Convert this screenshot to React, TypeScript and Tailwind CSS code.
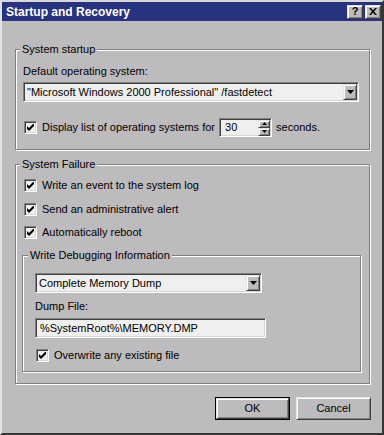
import React from "react";

const font = { fontFamily: '"Liberation Sans", Arial, sans-serif' };

const sunken =
  "border border-t-[#808080] border-l-[#808080] border-r-white border-b-white shadow-[inset_1px_1px_0_#404040,inset_-1px_-1px_0_#d6d6d6] bg-[#efefef]";
const raised =
  "border border-t-[#e4e4e4] border-l-[#e4e4e4] border-r-[#404040] border-b-[#404040] shadow-[inset_1px_1px_0_#ffffff,inset_-1px_-1px_0_#808080] bg-[#bdbbbd]";

const Check = () => (
  <div className={`w-[13px] h-[13px] shrink-0 flex items-center justify-center ${sunken}`}>
    <svg width="7" height="7" viewBox="0 0 7 7">
      <path d="M0 2 L2 4 L7 -1 L7 2 L2 7 L0 5 Z" fill="#000" />
    </svg>
  </div>
);

const Arrow = ({ up = false, w = 7 }: { up?: boolean; w?: number }) => (
  <svg width={w} height={Math.ceil(w / 2)} viewBox={`0 0 ${w} ${Math.ceil(w / 2)}`}>
    {up ? (
      <path d={`M0 ${Math.ceil(w / 2)} L${w / 2} 0 L${w} ${Math.ceil(w / 2)} Z`} fill="#000" />
    ) : (
      <path d={`M0 0 L${w} 0 L${w / 2} ${Math.ceil(w / 2)} Z`} fill="#000" />
    )}
  </svg>
);

const Combo = ({ text, className }: { text: string; className: string }) => (
  <div className={`h-[20px] flex items-center ${sunken} ${className}`}>
    <span className="flex-1 pl-[3px] text-[11px] leading-[13px] whitespace-nowrap overflow-hidden">{text}</span>
    <div className={`w-[14px] h-[16px] mr-[1px] flex items-center justify-center ${raised}`}>
      <Arrow />
    </div>
  </div>
);

const Group = ({
  label,
  className,
  labelLeft,
  children,
}: {
  label: string;
  className: string;
  labelLeft: string;
  children: React.ReactNode;
}) => (
  <div
    className={`relative border border-[#808080] shadow-[inset_1px_1px_0_#ffffff,1px_1px_0_#ffffff] flex flex-col ${className}`}
  >
    <span className={`absolute -top-[7px] ${labelLeft} px-[2px] bg-[#bdbbbd] text-[11px] leading-[13px]`}>{label}</span>
    {children}
  </div>
);

const CheckRow = ({ label, className }: { label: string; className: string }) => (
  <div className={`h-[17px] flex items-center gap-[5px] ${className}`}>
    <Check />
    <span className="text-[11px] leading-[13px]">{label}</span>
  </div>
);

export default function App() {
  return (
    <div
      style={font}
      className="w-[384px] h-[435px] flex flex-col bg-[#bdbbbd] text-black border-l-2 border-t-2 border-l-[#e2e2e2] border-t-[#d8d8d8] border-r-2 border-b-2 border-r-[#353535] border-b-[#353535] select-none"
    >
      <div className="h-[19px] bg-[#283380] flex items-center pl-[4px] pr-[1px]">
        <span className="flex-1 text-white font-bold text-[12px] leading-[14px]">Startup and Recovery</span>
        <div className={`w-[16px] h-[14px] flex items-center justify-center ${raised}`}>
          <span className="font-bold text-[11px] leading-[11px]">?</span>
        </div>
        <div className={`w-[16px] h-[14px] ml-[2px] flex items-center justify-center ${raised}`}>
          <svg width="8" height="7" viewBox="0 0 8 7">
            <path d="M0 0 H2 L4 2.5 L6 0 H8 L5 3.5 L8 7 H6 L4 4.5 L2 7 H0 L3 3.5 Z" fill="#000" />
          </svg>
        </div>
      </div>

      <div className="flex flex-col pl-[13px]">
        <Group label="System startup" className="mt-[28px] w-[355px] h-[101px]" labelLeft="left-[4px]">
          <div className="mt-[15px] ml-[7px] text-[11px] leading-[13px]">Default operating system:</div>
          <Combo
            text={'"Microsoft Windows 2000 Professional" /fastdetect'}
            className="mt-[4px] ml-[7px] w-[336px]"
          />
          <div className="mt-[16px] ml-[8px] h-[19px] flex items-center">
            <Check />
            <span className="ml-[5px] text-[11px] leading-[13px]">Display list of operating systems for</span>
            <div className={`ml-[4px] w-[53px] h-[19px] flex items-center ${sunken}`}>
              <span className="flex-1 pl-[5px] text-[11px] leading-[13px]">30</span>
              <div className="flex flex-col mr-[1px]">
                <div className={`w-[12px] h-[8px] flex items-center justify-center ${raised}`}>
                  <Arrow up w={5} />
                </div>
                <div className={`w-[12px] h-[8px] flex items-center justify-center ${raised}`}>
                  <Arrow w={5} />
                </div>
              </div>
            </div>
            <span className="ml-[4px] text-[11px] leading-[13px]">seconds.</span>
          </div>
        </Group>

        <Group label="System Failure" className="mt-[14px] w-[355px] h-[220px]" labelLeft="left-[4px]">
          <CheckRow label="Write an event to the system log" className="mt-[12px] ml-[8px]" />
          <CheckRow label="Send an administrative alert" className="mt-[7px] ml-[8px]" />
          <CheckRow label="Automatically reboot" className="mt-[6px] ml-[8px]" />

          <Group label="Write Debugging Information" className="mt-[14px] ml-[6px] w-[339px] h-[117px]" labelLeft="left-[5px]">
            <Combo text="Complete Memory Dump" className="mt-[17px] ml-[12px] w-[227px]" />
            <div className="mt-[7px] ml-[12px] text-[11px] leading-[13px]">Dump File:</div>
            <div className={`mt-[5px] ml-[12px] w-[231px] h-[20px] flex items-center ${sunken}`}>
              <span className="pl-[4px] text-[11px] leading-[13px]">%SystemRoot%\MEMORY.DMP</span>
            </div>
            <CheckRow label="Overwrite any existing file" className="mt-[9px] ml-[13px]" />
          </Group>
        </Group>

        <div className="mt-[13px] flex justify-end gap-[6px] pr-[11px]">
          <div className="w-[75px] h-[23px] border border-black">
            <div className={`w-full h-full flex items-center justify-center ${raised}`}>
              <span className="text-[11px] leading-[13px]">OK</span>
            </div>
          </div>
          <div className={`w-[75px] h-[23px] flex items-center justify-center ${raised}`}>
            <span className="text-[11px] leading-[13px]">Cancel</span>
          </div>
        </div>
      </div>
    </div>
  );
}
